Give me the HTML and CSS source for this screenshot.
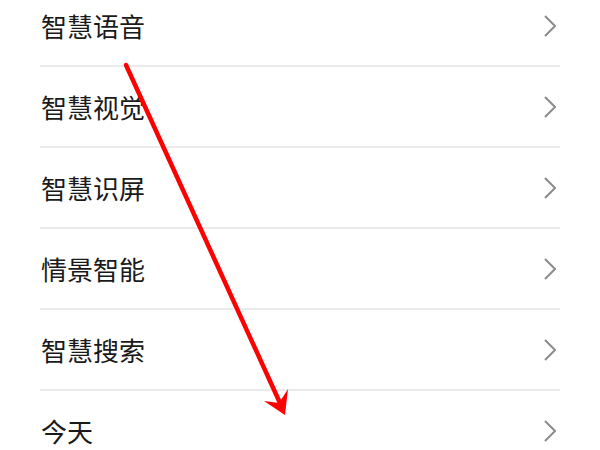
FILE: index.html
```
<!DOCTYPE html>
<html lang="zh">
<head>
<meta charset="utf-8">
<link rel="stylesheet" href="styles.css">
</head>
<body>
<div class="list">
  <div class="row"><span class="label">智慧语音</span><svg class="chev" viewBox="0 0 12 22"><path d="M1 1 L11 11 L1 21"/></svg></div>
  <div class="row"><span class="label">智慧视觉</span><svg class="chev" viewBox="0 0 12 22"><path d="M1 1 L11 11 L1 21"/></svg></div>
  <div class="row"><span class="label">智慧识屏</span><svg class="chev" viewBox="0 0 12 22"><path d="M1 1 L11 11 L1 21"/></svg></div>
  <div class="row"><span class="label">情景智能</span><svg class="chev" viewBox="0 0 12 22"><path d="M1 1 L11 11 L1 21"/></svg></div>
  <div class="row"><span class="label">智慧搜索</span><svg class="chev" viewBox="0 0 12 22"><path d="M1 1 L11 11 L1 21"/></svg></div>
  <div class="row last"><span class="label">今天</span><svg class="chev" viewBox="0 0 12 22"><path d="M1 1 L11 11 L1 21"/></svg></div>
</div>
<svg class="arrow" viewBox="0 0 600 450" width="600" height="450">
  <line x1="126" y1="65" x2="280" y2="403" stroke="#ff0000" stroke-width="4.5" stroke-linecap="round"/>
  <path d="M285 415 L264 401 L279 403 L288 389 Z" fill="#ff0000"/>
</svg>
</body>
</html>
```
FILE: styles.css
```
html, body {
  margin: 0;
  padding: 0;
  background: #ffffff;
  width: 600px;
  height: 450px;
  overflow: hidden;
  position: relative;
}
.list {
  margin: -14px 40px 0 40px;
  display: flex;
  flex-direction: column;
}
.row {
  height: 79px;
  border-bottom: 2px solid #ebebeb;
  display: flex;
  align-items: center;
  justify-content: space-between;
}
.label {
  font-family: "Noto Sans CJK SC", sans-serif;
  font-size: 26px;
  color: #1a1a1a;
  padding-left: 1px;
  line-height: 1;
}
.chev {
  width: 12px;
  height: 22px;
  margin-right: 4px;
  fill: none;
  stroke: #8c8c8c;
  stroke-width: 2;
}
.arrow {
  position: absolute;
  left: 0;
  top: 0;
  pointer-events: none;
}
```
